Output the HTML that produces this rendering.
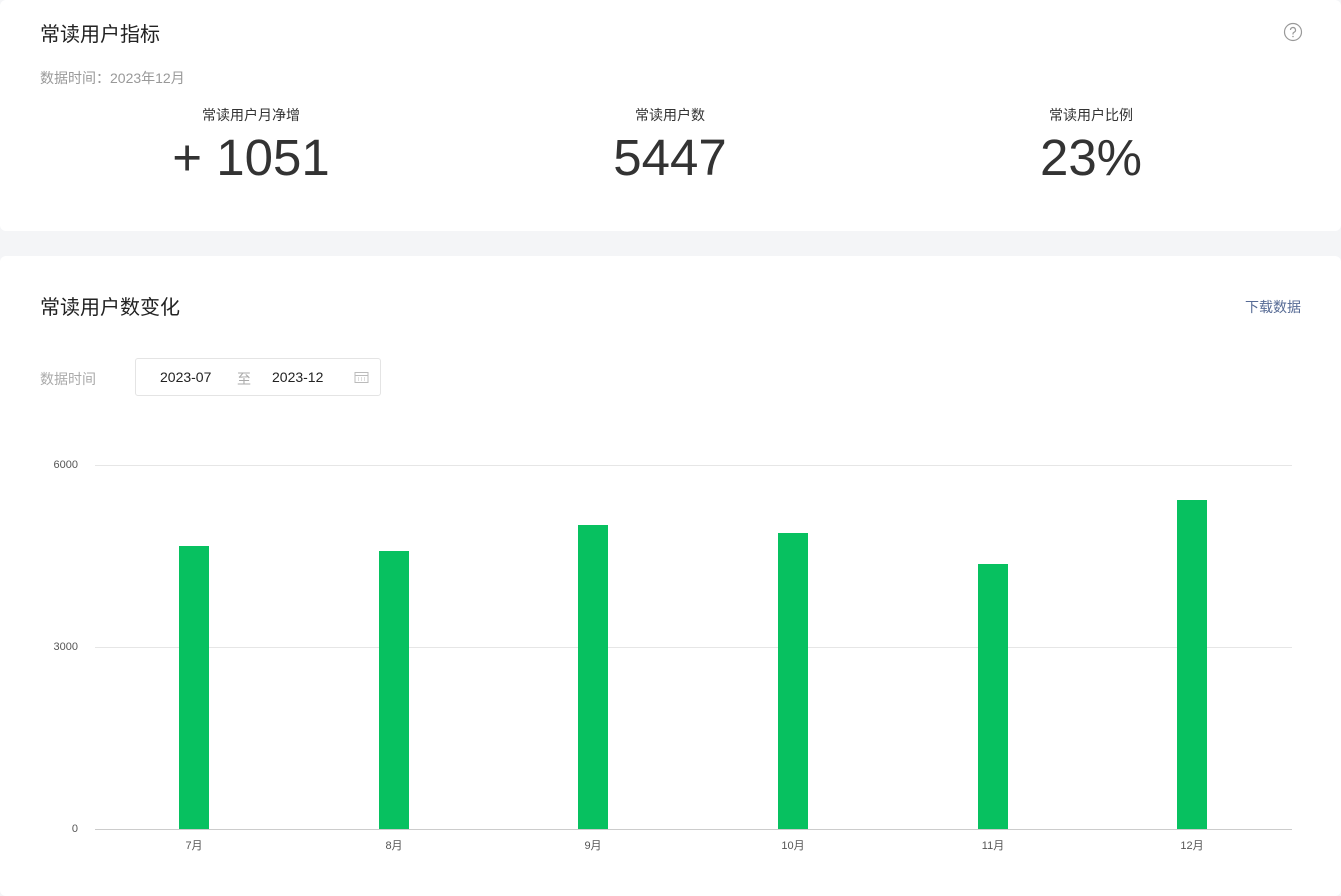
<!DOCTYPE html>
<html><head><meta charset="utf-8"><style>
*{margin:0;padding:0;box-sizing:border-box}
body{width:1341px;height:891px;background:#f4f5f7;font-family:"Liberation Sans","Noto Sans CJK SC",sans-serif;position:relative;overflow:hidden;color:#333}
.card{position:absolute;left:0;width:1341px;background:#fff;border-radius:6px}
.abs{position:absolute}
.bar{position:absolute;width:30px;background:#07c160}
.yl{position:absolute;font-size:11px;color:#555;text-align:right;width:40px;left:38px}
.xl{position:absolute;font-size:11px;color:#555;width:60px;text-align:center;top:837px}
.grid{position:absolute;left:95px;width:1197px;height:1px;background:#e6e6e6}
.metric{position:absolute;text-align:center;width:300px}
.metric .t{font-size:14px;color:#333}
.metric .v{font-size:51px;color:#333;line-height:60px;margin-top:3px}
</style></head><body>
<div class="card" style="top:0;height:231px">
  <div class="abs" style="left:40px;top:18px;font-size:20px;color:#222">常读用户指标</div>
  <svg class="abs" style="left:1283px;top:22px" width="20" height="20" viewBox="0 0 20 20"><circle cx="10" cy="10" r="8.5" fill="none" stroke="#999" stroke-width="1.2"/><path d="M7.5 8a2.5 2.5 0 1 1 3.5 2.3c-.7.3-1 .8-1 1.5v.7" fill="none" stroke="#999" stroke-width="1.2"/><circle cx="10" cy="14.5" r=".8" fill="#999"/></svg>
  <div class="abs" style="left:40px;top:68px;font-size:14px;color:#999">数据时间：2023年12月</div>
  <div class="metric" style="left:101px;top:105px"><div class="t">常读用户月净增</div><div class="v">+ 1051</div></div>
  <div class="metric" style="left:520px;top:105px"><div class="t">常读用户数</div><div class="v">5447</div></div>
  <div class="metric" style="left:941px;top:105px"><div class="t">常读用户比例</div><div class="v">23%</div></div>
</div>
<div class="card" style="top:256px;height:640px"></div>
<div class="abs" style="left:40px;top:291px;font-size:20px;color:#222">常读用户数变化</div>
<div class="abs" style="left:1245px;top:297px;font-size:14px;color:#576b95">下载数据</div>
<div class="abs" style="left:40px;top:369px;font-size:14px;color:#aaa">数据时间</div>
<div class="abs" style="left:135px;top:358px;width:246px;height:38px;border:1px solid #e4e4e4;border-radius:3px;font-size:14px;color:#222">
  <span class="abs" style="left:24px;top:10px">2023-07</span>
  <span class="abs" style="left:101px;top:10px;color:#aaa">至</span>
  <span class="abs" style="left:136px;top:10px">2023-12</span>
  <svg class="abs" style="left:218px;top:12px" width="15" height="13" viewBox="0 0 15 13"><rect x="1" y="1.5" width="13" height="10" fill="none" stroke="#bbb"/><path d="M1 4.5h13M4 7h1M7 7h1M10 7h1M4 9h1M7 9h1M10 9h1" stroke="#bbb"/></svg>
</div>
<div class="grid" style="top:465px"></div>
<div class="grid" style="top:647px"></div>
<div class="grid" style="top:829px;background:#ccc"></div>
<div class="yl" style="top:459px">6000</div>
<div class="yl" style="top:641px">3000</div>
<div class="yl" style="top:823px">0</div>
<div class="bar" style="left:179px;top:546px;height:283px"></div>
<div class="bar" style="left:379px;top:551px;height:278px"></div>
<div class="bar" style="left:578px;top:525px;height:304px"></div>
<div class="bar" style="left:778px;top:533px;height:296px"></div>
<div class="bar" style="left:978px;top:564px;height:265px"></div>
<div class="bar" style="left:1177px;top:500px;height:329px"></div>
<div class="xl" style="left:164px">7月</div>
<div class="xl" style="left:364px">8月</div>
<div class="xl" style="left:563px">9月</div>
<div class="xl" style="left:763px">10月</div>
<div class="xl" style="left:963px">11月</div>
<div class="xl" style="left:1162px">12月</div>
</body></html>
